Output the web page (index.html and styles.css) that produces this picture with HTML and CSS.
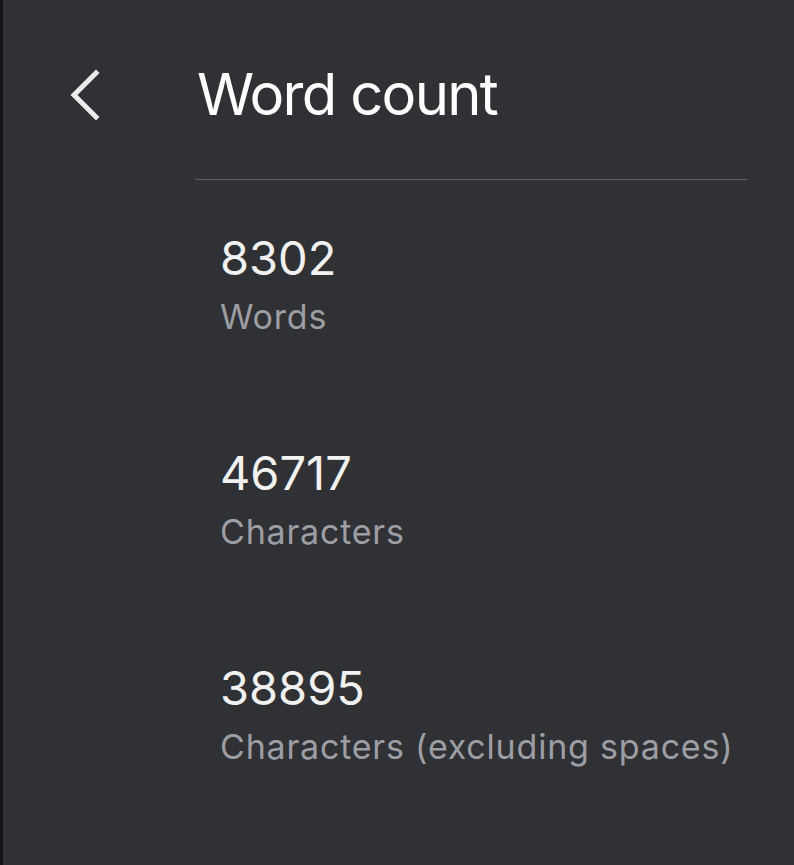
FILE: index.html
```html
<!DOCTYPE html>
<html>
<head>
<meta charset="utf-8">
<link rel="stylesheet" href="styles.css">
</head>
<body>
<div class="edge"></div>
<div class="panel">
  <header class="header">
    <div class="back">
      <svg width="40" height="56" viewBox="0 0 40 56"><polyline points="29,6 7,28 29,50" fill="none" stroke="#ebebeb" stroke-width="5" stroke-linecap="square" stroke-linejoin="miter"/></svg>
    </div>
    <h1 class="title">Word count</h1>
  </header>
  <div class="divider"></div>
  <ul class="stats">
    <li class="stat"><div class="num">8302</div><div class="label">Words</div></li>
    <li class="stat"><div class="num">46717</div><div class="label">Characters</div></li>
    <li class="stat"><div class="num">38895</div><div class="label">Characters (excluding spaces)</div></li>
  </ul>
</div>
</body>
</html>
```
FILE: styles.css
```css
html, body {
  margin: 0;
  height: 100%;
}
body {
  background: #303135;
  display: flex;
  font-family: Inter, "Liberation Sans", sans-serif;
  overflow: hidden;
}
.edge {
  width: 3px;
  background: #131418;
  flex: none;
}
.panel {
  flex: 1;
  display: flex;
  flex-direction: column;
}
.header {
  display: flex;
  align-items: flex-start;
  height: 179px;
  padding-top: 59px;
  box-sizing: border-box;
}
.back {
  width: 194px;
  padding-left: 64px;
  padding-top: 8px;
  box-sizing: border-box;
}
.back svg {
  display: block;
}
.title {
  margin: 0;
  font-family: Inter, sans-serif;
  font-weight: 400;
  font-size: 58px;
  line-height: 70px;
  color: #ffffff;
  letter-spacing: -1.7px;
}
.divider {
  margin-left: 192px;
  width: 552px;
  height: 1px;
  background: #5c5d61;
}
.stats {
  list-style: none;
  margin: 0;
  padding: 53px 0 0 217px;
  display: flex;
  flex-direction: column;
  gap: 104px;
}
.num {
  font-size: 47px;
  line-height: 50px;
  color: #f2f2f2;
  letter-spacing: 0px;
}
.label {
  margin-top: 7px;
  font-size: 34px;
  line-height: 54px;
  color: #9d9ea3;
  letter-spacing: 0.8px;
}
```
